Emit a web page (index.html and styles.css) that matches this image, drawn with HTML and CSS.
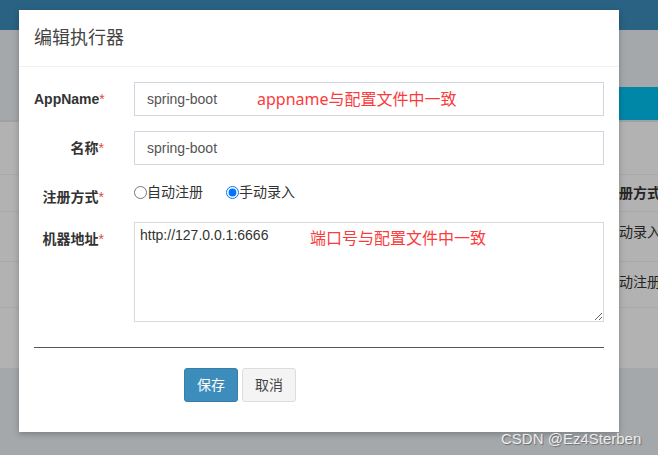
FILE: index.html
```html
<!DOCTYPE html>
<html lang="zh-CN">
<head>
<meta charset="utf-8">
<title>编辑执行器</title>
<link rel="stylesheet" href="styles.css">
</head>
<body>
<div class="page">
  <div class="topbar"></div>
  <div class="toolbar"><span class="btn-teal"></span></div>
  <div class="table">
    <div class="trow r1"></div>
    <div class="trow thead"><span class="cell">注册方式</span></div>
    <div class="trow r2"><span class="cell">手动录入</span></div>
    <div class="trow r3"><span class="cell">自动注册</span></div>
    <div class="trow r4"></div>
  </div>
</div>

<div class="modal">
  <div class="modal-header"><h4 class="modal-title">编辑执行器</h4></div>
  <div class="modal-body">
    <form class="form">
      <div class="form-group">
        <label class="control-label">AppName<span class="req">*</span></label>
        <div class="field">
          <input class="input" type="text" value="spring-boot">
          <span class="note note-app">appname与配置文件中一致</span>
        </div>
      </div>
      <div class="form-group">
        <label class="control-label">名称<span class="req">*</span></label>
        <div class="field">
          <input class="input" type="text" value="spring-boot">
        </div>
      </div>
      <div class="form-group">
        <label class="control-label">注册方式<span class="req">*</span></label>
        <div class="field radios">
          <label class="radio radio-first"><input type="radio" name="type">自动注册</label>
          <label class="radio"><input type="radio" name="type" checked>手动录入</label>
        </div>
      </div>
      <div class="form-group last">
        <label class="control-label">机器地址<span class="req">*</span></label>
        <div class="field">
          <textarea class="textarea">http://127.0.0.1:6666</textarea>
          <span class="note note-port">端口号与配置文件中一致</span>
        </div>
      </div>
      <hr class="divider">
      <div class="footer">
        <button type="button" class="btn btn-primary">保存</button>
        <button type="button" class="btn btn-default">取消</button>
      </div>
    </form>
  </div>
</div>

<div class="watermark">CSDN @Ez4Sterben</div>
</body>
</html>
```

FILE: styles.css
```css
* { box-sizing: border-box; }

html, body {
  margin: 0;
  padding: 0;
}

body {
  width: 658px;
  height: 455px;
  overflow: hidden;
  position: relative;
  background: #a4a8ab;
  font-family: "Liberation Sans", "Noto Sans CJK SC", sans-serif;
  font-size: 14px;
  color: #333;
}

/* ---------- background page (under overlay) ---------- */
.topbar {
  height: 30px;
  background: #2a6283;
}

.toolbar {
  height: 90px;
  display: flex;
  align-items: flex-end;
  justify-content: flex-end;
}

.btn-teal {
  display: block;
  width: 40px;
  height: 33px;
  background: #0087a8;
}

.table {
  background: #b2b2b2;
  border-top: 2px solid #9fa2a5;
}

.trow {
  display: flex;
  justify-content: flex-end;
  border-bottom: 1px solid #a8a8a8;
  font-size: 14px;
  color: #242424;
  overflow: hidden;
}

.trow .cell {
  width: 53px;
  flex: none;
  white-space: nowrap;
  line-height: 16px;
}

.r1 { height: 53px; }
.thead { height: 37px; align-items: center; font-weight: bold; }
.r2 { height: 50px; padding-top: 12px; align-items: flex-start; }
.r3 { height: 46px; padding-top: 12px; align-items: flex-start; }
.r4 { height: 60px; border-bottom: none; }

/* ---------- modal ---------- */
.modal {
  position: absolute;
  left: 19px;
  top: 10px;
  width: 600px;
  height: 422px;
  background: #fff;
  box-shadow: 0 2px 6px rgba(0, 0, 0, 0.25);
}

.modal-header {
  padding: 15px;
  border-bottom: 1px solid #f2f2f2;
}

.modal-title {
  margin: 0;
  font-size: 18px;
  font-weight: normal;
  line-height: 26px;
  color: #444;
}

.modal-body {
  padding: 15px 0 30px;
}

.form-group {
  display: flex;
  margin-bottom: 15px;
}

.form-group.last {
  margin-bottom: 25px;
}

.control-label {
  width: 100px;
  flex: none;
  padding: 7px 15px 0;
  text-align: right;
  font-weight: bold;
  font-size: 14px;
  line-height: 20px;
  color: #333;
  white-space: nowrap;
}

.req {
  color: #dd4b39;
  font-weight: normal;
}

.field {
  flex: 1;
  padding: 0 15px;
  position: relative;
}

.input {
  display: block;
  width: 100%;
  height: 34px;
  padding: 6px 12px;
  border: 1px solid #d2d6de;
  border-radius: 0;
  font-family: "Liberation Sans", "Noto Sans CJK SC", sans-serif;
  font-size: 14px;
  color: #555;
  outline: none;
}

.textarea {
  display: block;
  width: 100%;
  height: 100px;
  padding: 2px 5px;
  border: 1px solid #d9d9d9;
  border-radius: 0;
  font-family: "Liberation Sans", "Noto Sans CJK SC", sans-serif;
  font-size: 14px;
  line-height: 20px;
  color: #333;
  outline: none;
  resize: both;
}

.note {
  position: absolute;
  font-family: "Noto Sans", "Noto Sans CJK SC", sans-serif;
  font-size: 16px;
  color: #fa3c3c;
  white-space: nowrap;
  pointer-events: none;
}

.note-app {
  left: 138px;
  top: 0;
  line-height: 34px;
}

.note-port {
  left: 191px;
  top: 6px;
  line-height: 20px;
}

.radios {
  display: flex;
  align-items: flex-start;
  padding-top: 2px;
}

.radio {
  display: flex;
  align-items: center;
  font-size: 14px;
  line-height: 20px;
  color: #333;
  white-space: nowrap;
}

.radio input {
  margin: 0;
  width: 13px;
  height: 13px;
}

.radio-first {
  margin-right: 23px;
}

.divider {
  margin: 0 15px;
  border: none;
  border-top: 1px solid #555;
  height: 0;
}

.footer {
  display: flex;
  gap: 4px;
  padding: 20px 0 0 165px;
}

.btn {
  width: 54px;
  height: 34px;
  padding: 0;
  border-radius: 3px;
  border: 1px solid transparent;
  font-family: "Liberation Sans", "Noto Sans CJK SC", sans-serif;
  font-size: 14px;
  line-height: 32px;
}

.btn-primary {
  background: #3c8dbc;
  border-color: #367fa9;
  color: #fff;
}

.btn-default {
  background: #f4f4f4;
  border-color: #ddd;
  color: #444;
}

/* ---------- watermark ---------- */
.watermark {
  position: absolute;
  left: 501px;
  top: 430px;
  font-family: "Liberation Sans", sans-serif;
  font-size: 15px;
  line-height: 18px;
  color: rgba(255, 255, 255, 0.85);
  text-shadow: 1px 1px 1px rgba(0, 0, 0, 0.35);
  white-space: nowrap;
}
```
